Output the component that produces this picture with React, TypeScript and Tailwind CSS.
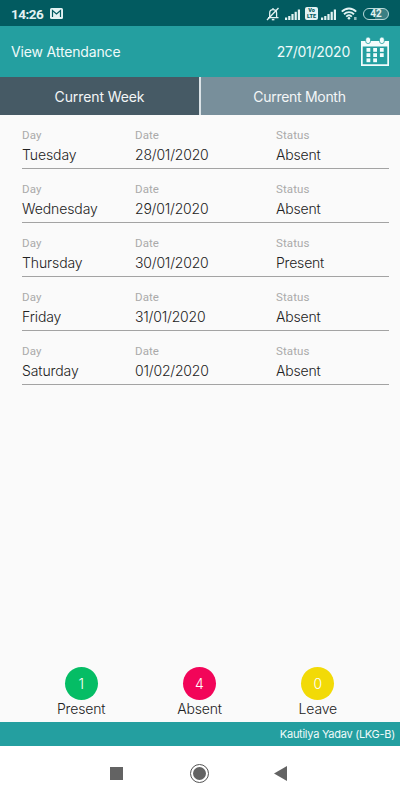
const records = [
	{ day: "Tuesday", date: "28/01/2020", status: "Absent" },
	{ day: "Wednesday", date: "29/01/2020", status: "Absent" },
	{ day: "Thursday", date: "30/01/2020", status: "Present" },
	{ day: "Friday", date: "31/01/2020", status: "Absent" },
	{ day: "Saturday", date: "01/02/2020", status: "Absent" },
]

const totals = [
	{ label: "Present", count: 1, color: "bg-[#05bd65]" },
	{ label: "Absent", count: 4, color: "bg-[#f20559]" },
	{ label: "Leave", count: 0, color: "bg-[#f2da07]" },
]

// bars get taller from left to right
const Signal = () => (
	<svg width="15" height="12" viewBox="0 0 15 12" fill="currentColor">
		<rect x="0" y="9.5" width="2.2" height="2.5" />
		<rect x="3.2" y="8" width="2.2" height="4" />
		<rect x="6.4" y="6" width="2.2" height="6" />
		<rect x="9.6" y="3.8" width="2.2" height="8.2" />
		<rect x="12.8" y="1.5" width="2.2" height="10.5" />
	</svg>
)

const StatusBar = () => (
	<div className="flex h-[26px] items-center bg-[#025b60] pt-px pl-[11px] pr-[11px] font-[Roboto,sans-serif] text-[#e3f3f3]">
		<span className="w-[39px] text-[13.5px] font-bold leading-4 tracking-[-0.5px]">14:26</span>
		<svg width="13" height="11" viewBox="0 0 13 11">
			<rect width="13" height="11" rx="1.5" fill="currentColor" />
			<path d="M2.5 9V2.5L6.5 6l4-3.5V9" fill="none" stroke="#025b60" strokeWidth="1.2" />
		</svg>
		<svg className="ml-auto mr-[5px]" width="14" height="14" viewBox="0 0 14 14" fill="none" stroke="currentColor" strokeWidth="1.3">
			<path d="M2 10.700h10.500M3.700 10.500V6.200C3.700 4 5 2.700 7 2.700s3.600 1.300 3.600 3.500v4.300M7 1v1.700" />
			<path d="M5.800 12.600h2.600" strokeWidth="1.500" />
			<path d="M1 13 12.500 1" />
		</svg>
		<Signal />
		<div className="ml-[5px] mr-[3px] flex h-[13px] w-[13px] flex-col items-center justify-center rounded-[2px] bg-[#e3f3f3] text-[5.5px] font-black leading-[5.5px] text-[#025b60]">
			<span>Vo</span>
			<span>LTE</span>
		</div>
		<Signal />
		<svg className="ml-[5px] mr-[5px]" width="17" height="13" viewBox="0 0 17 13" fill="none" stroke="currentColor" strokeWidth="1.9">
			<path d="M0.800 4.700C5 .4 11 .4 15.200 4.700" />
			<path d="M3 7.200c2.900-2.800 7.100-2.800 10 0" />
			<path d="M5.200 9.600c1.700-1.600 3.900-1.600 5.600 0" />
			<circle cx="8" cy="11.300" r="1.300" fill="currentColor" stroke="none" />
			<path d="M14.300 10v3" strokeWidth="2.5" opacity=".65" />
		</svg>
		<div className="flex h-3 w-[26px] items-center justify-center rounded-full border border-[#b9d9d9] bg-linear-to-r from-[#025b60] from-45% to-[#3b7f83] to-45% text-[10px] font-bold leading-none">
			42
		</div>
	</div>
)

const CalendarIcon = () => (
	<svg width="28" height="30" viewBox="0 0 28 30" fill="#f2fcfc">
		<path fillRule="evenodd" d="M0 4h28v25H0zM1.700 9.500v17.800h24.600V9.500z" />
		<g stroke="#249fa0" strokeWidth="0.8">
			<rect x="4.700" y="0" width="4.800" height="6.600" rx="2.400" />
			<rect x="18.500" y="0" width="4.800" height="6.600" rx="2.400" />
		</g>
		{[11, 16.2, 21.4].map((y, row) =>
			[5.5, 12.2, 18.9].map((x, col) =>
				row == 2 && col == 2 ? null : <rect key={`${x}-${y}`} x={x} y={y} width="3.800" height="3.800" />
			)
		)}
	</svg>
)

const Field = ({ label, value, tracking }: { label: string; value: string; tracking: string }) => (
	<div>
		<p className="font-[Roboto,sans-serif] text-[11.5px] leading-[14px] tracking-[0.1px] text-[#aaaaaa]">{label}</p>
		<p className={`mt-[3px] text-sm font-light leading-5 text-[#222222] ${tracking}`}>{value}</p>
	</div>
)

const App = () => {
	return (
		<div className="flex h-[800px] w-[400px] flex-col overflow-hidden bg-[#fafafa] font-[Inter,sans-serif]">
			<StatusBar />
			<header className="flex h-[51px] items-center bg-[#249fa0] pl-[11px] pr-[11px] text-sm text-[#effafa]">
				<h1 className="tracking-[-0.15px]">View Attendance</h1>
				<span className="ml-auto mr-[11px] tracking-[-0.25px]">27/01/2020</span>
				<CalendarIcon />
			</header>
			<div className="flex h-[38px] gap-[2px] bg-[#dbe3e7] text-sm text-[#f3f6f7]">
				<button className="w-[199px] bg-[#465a65] pt-px tracking-[-0.1px]">Current Week</button>
				<button className="flex-1 bg-[#788f9b] pt-px pr-[2px] tracking-[-0.3px]">Current Month</button>
			</div>
			<main className="flex-1 pl-[22px] pr-[11px]">
				{records.map((record) => (
					<div
						className="grid h-[54px] grid-cols-[113px_141px_1fr] border-b border-[#a3a3a3] pt-[13px]"
						key={record.date}
					>
						<Field label="Day" value={record.day} tracking="tracking-[-0.1px]" />
						<Field label="Date" value={record.date} tracking="tracking-[-0.2px]" />
						<Field label="Status" value={record.status} tracking="tracking-[-0.2px]" />
					</div>
				))}
			</main>
			<div className="grid h-[56px] grid-cols-3 pt-px pl-[22px] pr-[23px]">
				{totals.map((total) => (
					<div className="flex flex-col items-center" key={total.label}>
						<div className={`flex h-[33px] w-[33px] items-center justify-center rounded-full text-sm font-light text-white ${total.color}`}>
							{total.count}
						</div>
						<p className="text-sm font-light leading-[18px] tracking-[-0.15px] text-[#222222]">{total.label}</p>
					</div>
				))}
			</div>
			<footer className="flex h-6 items-center justify-end bg-[#249fa0] pr-[5px] text-[11px] tracking-[-0.27px] text-[#effafa]">
				Kautilya Yadav (LKG-B)
			</footer>
			<nav className="flex h-[54px] items-center bg-white pl-[110px]">
				<div className="h-[13px] w-[13px] bg-[#636363]" />
				<div className="ml-[67px] flex h-[19px] w-[19px] items-center justify-center rounded-full border border-[#555555]">
					<div className="h-[13px] w-[13px] rounded-full bg-[#636363]" />
				</div>
				<svg className="ml-[65px]" width="13" height="15" viewBox="0 0 13 15">
					<path d="M0 7.500 13 0v15z" fill="#636363" />
				</svg>
			</nav>
		</div>
	)
}

export default App
